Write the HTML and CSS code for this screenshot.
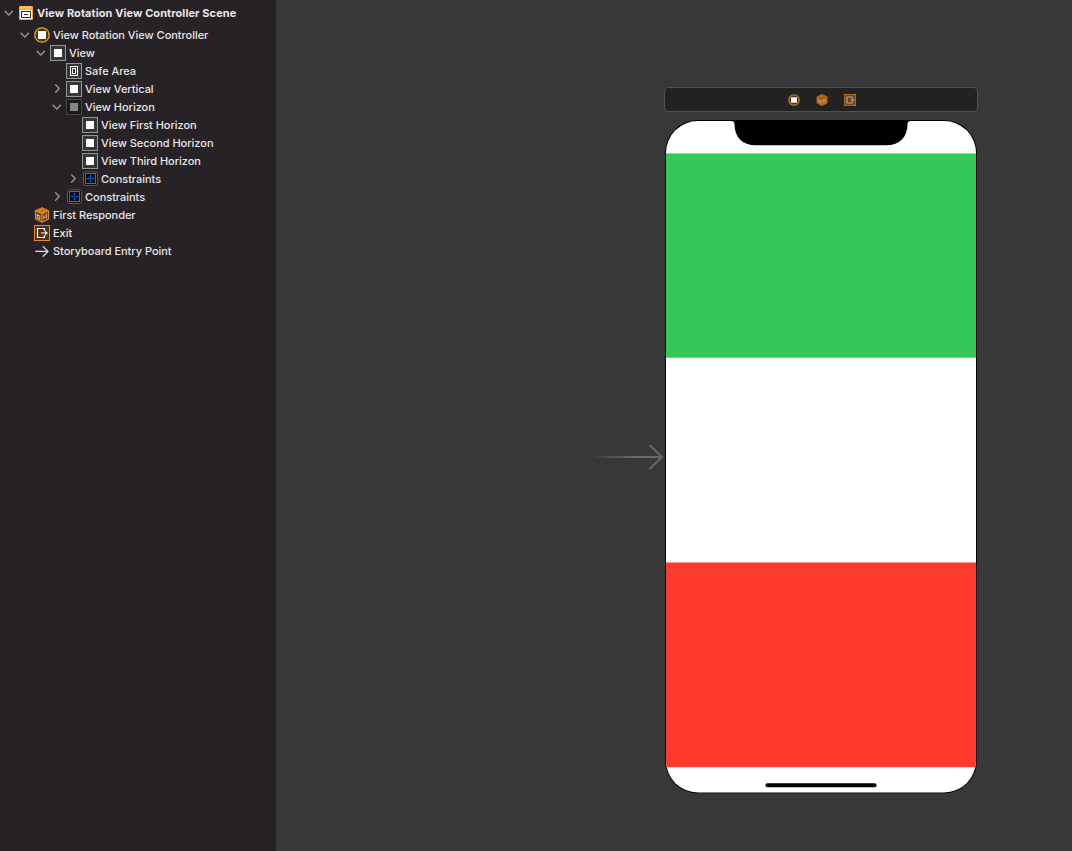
FILE: index.html
```html
<!DOCTYPE html>
<html lang="en">
<head>
  <meta charset="UTF-8" />
  <meta name="viewport" content="width=device-width, initial-scale=1" />
  <title>View Rotation View Controller Scene</title>
  <link rel="stylesheet" href="styles.css">
</head>
<body>

  <!-- Shared icons -->
  <svg class="sprite" width="0" height="0">
    <symbol id="open" viewBox="0 0 10 16"><path d="M1.2 6.2 L4.8 10 L8.4 6.2" fill="none" stroke="#989699" stroke-width="1.4" stroke-linecap="round" stroke-linejoin="round"/></symbol>
    <symbol id="closed" viewBox="0 0 10 16"><path d="M3.6 3.8 L7.2 7.5 L3.6 11.2" fill="none" stroke="#989699" stroke-width="1.4" stroke-linecap="round" stroke-linejoin="round"/></symbol>
    <symbol id="scene" viewBox="0 0 16 16">
      <rect x="1" y="1" width="14" height="14" rx="1" fill="#f7a221"/>
      <path d="M2.5 3.5 L4 1.5 M5.5 3.5 L7 1.5 M8.5 3.5 L10 1.5 M11.5 3.5 L13 1.5" stroke="#fff" stroke-width="1.2"/>
      <rect x="2" y="5" width="12" height="9" fill="#fff"/>
      <rect x="3" y="6" width="10" height="7" fill="#3b2a12"/>
      <rect x="4" y="7" width="8" height="5" fill="#fff"/>
      <rect x="6" y="9" width="4" height="1" fill="#3b2a12"/>
    </symbol>
    <symbol id="controller" viewBox="0 0 16 16"><circle cx="8" cy="8" r="7.2" fill="#4b3510" stroke="#f5a623" stroke-width="1.3"/><rect x="4" y="4" width="8" height="8" fill="#fff"/></symbol>
    <symbol id="view" viewBox="0 0 16 16"><rect x=".5" y=".5" width="15" height="15" fill="#363637" stroke="#959595"/><rect x="4" y="4" width="8" height="8" fill="#fff"/></symbol>
    <symbol id="hidden-view" viewBox="0 0 16 16"><rect x=".5" y=".5" width="15" height="15" fill="#1b1b1c" stroke="#48464a"/><rect x="4" y="4" width="8" height="8" fill="#858585"/></symbol>
    <symbol id="safe" viewBox="0 0 16 16"><rect x=".5" y=".5" width="15" height="15" fill="#363637" stroke="#959595"/><rect x="4.5" y="3.5" width="7" height="9" fill="none" stroke="#fff"/><rect x="6.5" y="5.5" width="3" height="5" fill="none" stroke="#fff"/></symbol>
    <symbol id="constraints" viewBox="0 0 16 16"><rect x="1.5" y=".8" width="14" height="13.7" rx="2" fill="#111" stroke="#59585c"/><rect x="3.5" y="2.5" width="10" height="10" fill="#050b14" stroke="#0a7aff"/><path d="M5 7.5 H7 M8 7.5 H9 M10 7.5 H12 M8.5 4 V6 M8.5 9 V11" stroke="#0a7aff"/></symbol>
    <symbol id="responder" viewBox="0 0 16 16">
      <path d="M8 .8 L14.5 3.8 V12 L8 15.2 L1.5 12 V3.8 Z" fill="#6b3b10" stroke="#e9872b" stroke-width="1.2" stroke-linejoin="round"/>
      <path d="M1.5 3.8 L8 .8 L14.5 3.8 L8 6.5 Z" fill="#cf741f"/>
      <path d="M1.5 3.8 L8 6.5 L14.5 3.8 M8 6.5 V15" fill="none" stroke="#e9872b" stroke-width="1.2"/>
      <path d="M3.3 7 V11 L5.8 12.2 V9 L3.5 8.2 M10 8.5 V12 M12.3 6.8 V11.3" fill="none" stroke="#d3b89f" stroke-width="1.1"/>
    </symbol>
    <symbol id="exit" viewBox="0 0 16 16"><rect x=".5" y=".5" width="15" height="15" fill="#50300f" stroke="#e9872b"/><path d="M10.5 6 V3.5 H3.5 V12.5 H10.5 V10" fill="none" stroke="#fff" stroke-width="1.2"/><path d="M7 8 H12" stroke="#fff"/><path d="M11 5.8 L14 8 L11 10.2 Z" fill="#fff"/></symbol>
    <symbol id="entry" viewBox="0 0 16 16"><path d="M1.8 8.4 H14 M9.2 3.6 L14 8.4 L9.2 13.2" fill="none" stroke="#dedddf" stroke-width="1.3" stroke-linecap="round" stroke-linejoin="round"/></symbol>

    <!-- Simplified versions for the dock -->
    <symbol id="dock-controller" viewBox="0 0 12 12"><circle cx="6" cy="6" r="5.2" fill="#4b3510" stroke="#b47d1c" stroke-width="1.3"/><rect x="3" y="3.3" width="6" height="5.4" fill="#fff"/></symbol>
    <symbol id="dock-responder" viewBox="0 0 12 12"><path d="M6 .6 L11 2.8 V9 L6 11.5 L1 9 V2.8 Z" fill="#b4651d" stroke="#b4651d" stroke-linejoin="round"/><path d="M3 5 V8 L4.6 8.8 V6 M7.2 9 V6 L9.2 5 V8" fill="none" stroke="#b39a84"/><path d="M1.5 3.2 L6 5 L10.5 3.2" fill="none" stroke="#8b4c14" stroke-width=".7"/></symbol>
    <symbol id="dock-exit" viewBox="0 0 12 12"><rect x=".6" y=".6" width="10.8" height="10.8" fill="#6a3c14" stroke="#b4651d" stroke-width="1.2"/><path d="M8 4.6 V3 H3 V9 H8 V7.4" fill="none" stroke="#c0aa98" stroke-width="1.2"/><path d="M6.5 6 H9.5 M8.3 4.6 L9.8 6 L8.3 7.4" fill="none" stroke="#c0aa98"/></symbol>
  </svg>

  <div class="editor">
    <!-- Document outline -->
    <div class="outline">
      <div class="row scene"><svg class="arrow"><use href="#open"/></svg><svg class="icon"><use href="#scene"/></svg><span>View Rotation View Controller Scene</span></div>
      <div class="row level-1"><svg class="arrow"><use href="#open"/></svg><svg class="icon"><use href="#controller"/></svg><span>View Rotation View Controller</span></div>
      <div class="row level-2"><svg class="arrow"><use href="#open"/></svg><svg class="icon"><use href="#view"/></svg><span>View</span></div>
      <div class="row level-3"><svg class="arrow"></svg><svg class="icon"><use href="#safe"/></svg><span>Safe Area</span></div>
      <div class="row level-3"><svg class="arrow"><use href="#closed"/></svg><svg class="icon"><use href="#view"/></svg><span>View Vertical</span></div>
      <div class="row level-3"><svg class="arrow"><use href="#open"/></svg><svg class="icon"><use href="#hidden-view"/></svg><span>View Horizon</span></div>
      <div class="row level-4"><svg class="arrow"></svg><svg class="icon"><use href="#view"/></svg><span>View First Horizon</span></div>
      <div class="row level-4"><svg class="arrow"></svg><svg class="icon"><use href="#view"/></svg><span>View Second Horizon</span></div>
      <div class="row level-4"><svg class="arrow"></svg><svg class="icon"><use href="#view"/></svg><span>View Third Horizon</span></div>
      <div class="row level-4"><svg class="arrow"><use href="#closed"/></svg><svg class="icon"><use href="#constraints"/></svg><span>Constraints</span></div>
      <div class="row level-3"><svg class="arrow"><use href="#closed"/></svg><svg class="icon"><use href="#constraints"/></svg><span>Constraints</span></div>
      <div class="row level-1"><svg class="arrow"></svg><svg class="icon"><use href="#responder"/></svg><span>First Responder</span></div>
      <div class="row level-1"><svg class="arrow"></svg><svg class="icon"><use href="#exit"/></svg><span>Exit</span></div>
      <div class="row level-1"><svg class="arrow"></svg><svg class="icon"><use href="#entry"/></svg><span>Storyboard Entry Point</span></div>
    </div>

    <!-- Canvas -->
    <div class="canvas">
      <svg class="entry-arrow" viewBox="0 0 74 28">
        <defs><linearGradient id="fade" gradientUnits="userSpaceOnUse" x1="0" y1="0" x2="40" y2="0"><stop offset="0" stop-color="#686868" stop-opacity="0"/><stop offset="1" stop-color="#686868"/></linearGradient></defs>
        <path d="M0 13 H71 V15 H0 Z" fill="url(#fade)"/>
        <path d="M58.5 2 L71 14 L58.5 26" fill="none" stroke="#686868" stroke-width="2"/>
      </svg>
      <div class="scene-view">
        <div class="dock">
          <svg class="dock-icon"><use href="#dock-controller"/></svg>
          <svg class="dock-icon"><use href="#dock-responder"/></svg>
          <svg class="dock-icon"><use href="#dock-exit"/></svg>
        </div>
        <svg class="phone" viewBox="0 0 312 674">
          <defs><clipPath id="screen"><rect x="1" y="1" width="310" height="671.5" rx="32"/></clipPath></defs>
          <rect width="312" height="673.3" rx="33" fill="#000"/>
          <g clip-path="url(#screen)">
            <rect width="312" height="674" fill="#fff"/>
            <rect y="33.4" width="312" height="204.3" fill="#35c759"/>
            <rect y="442.5" width="312" height="204.7" fill="#ff3b30"/>
          </g>
          <path d="M66 0 V1 Q69.5 1 69.5 4 C69.5 17 77 25.3 91 25.3 H221 C235 25.3 242.5 17 242.5 4 Q242.5 1 246 1 V0 Z" fill="#000"/>
          <rect x="100.5" y="663.2" width="111" height="4" rx="2" fill="#000"/>
        </svg>
      </div>
    </div>
  </div>

</body>
</html>
```
FILE: styles.css
```css
body {
  margin: 0;
  background-color: #383838;
  font-family: Inter, sans-serif;
  font-size: 11px;
  font-weight: 500;
  letter-spacing: -0.03px;
  color: #e8e7e9;
}

.sprite {
  position: absolute;
}

.editor {
  display: flex;
  height: 851px;
  overflow: hidden;
}

.outline {
  width: 276px;
  flex-shrink: 0;
  padding-top: 4px;
  box-sizing: border-box;
  background-color: #272226;
}

.row {
  display: flex;
  align-items: center;
  height: 18px;
  line-height: 18px;
  white-space: nowrap;
  padding-left: 4px;
}

.row.scene {
  font-weight: 700;
  letter-spacing: 0.08px;
  margin-bottom: 4px;
}

.level-1 {
  padding-left: 20px;
}

.level-2 {
  padding-left: 36px;
}

.level-3 {
  padding-left: 52px;
}

.level-4 {
  padding-left: 68px;
}

.arrow {
  width: 10px;
  height: 16px;
  margin-right: 4px;
}

.icon {
  width: 16px;
  height: 16px;
  margin-right: 3px;
}

.canvas {
  position: relative;
  flex: 1;
  background-color: #383838;
}

.scene-view {
  display: flex;
  flex-direction: column;
  gap: 8px;
  width: 314px;
  margin: 87px 0 0 388px;
}

.dock {
  display: flex;
  align-items: center;
  justify-content: center;
  gap: 16px;
  height: 25px;
  padding: 1px 0 0 2px;
  box-sizing: border-box;
  border: 1px solid #505050;
  border-radius: 4px;
  background-color: #222;
}

.dock-icon {
  width: 12px;
  height: 12px;
}

.phone {
  width: 312px;
  height: 674px;
  margin-left: 1px;
}

.entry-arrow {
  position: absolute;
  left: 315px;
  top: 443px;
  width: 74px;
  height: 28px;
}
```
